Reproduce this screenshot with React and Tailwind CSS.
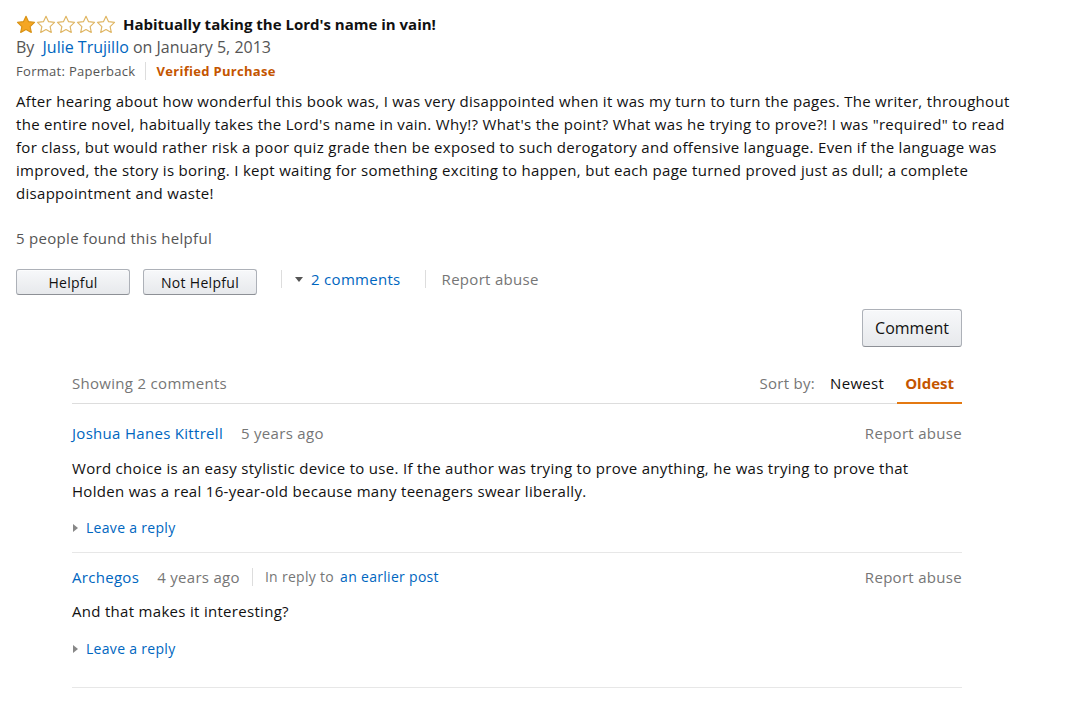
const FONT = { fontFamily: '"Open Sans", "Liberation Sans", sans-serif' };

function Star({ filled }) {
  return (
    <svg width="20" height="19" viewBox="0 0 24 23">
      <path
        d="M12 1.5l3.1 6.6 7.2.9-5.3 5 1.4 7.1L12 17.6l-6.4 3.5 1.4-7.1-5.3-5 7.2-.9z"
        fill={filled ? "#f5a623" : "#ffffff"}
        stroke={filled ? "#d99214" : "#dfb562"}
        strokeWidth="1.4"
        strokeLinejoin="round"
      />
    </svg>
  );
}

function Btn({ children, className = "" }) {
  return (
    <button
      className={
        "rounded-[3px] border border-[#adb1b8] border-b-[#8d9096] bg-gradient-to-b from-[#f7f8fa] to-[#e7e9ec] text-[#111] shadow-[0_1px_0_rgba(255,255,255,0.6)_inset] " +
        className
      }
    >
      {children}
    </button>
  );
}

function Caret({ dir }) {
  if (dir === "down")
    return (
      <svg width="8" height="5" viewBox="0 0 8 5">
        <path d="M0 0h8L4 5z" fill="#555" />
      </svg>
    );
  return (
    <svg width="5" height="8" viewBox="0 0 5 8">
      <path d="M0 0l5 4-5 4z" fill="#888" />
    </svg>
  );
}

const bodyLines = [
  "After hearing about how wonderful this book was, I was very disappointed when it was my turn to turn the pages. The writer, throughout",
  "the entire novel, habitually takes the Lord's name in vain. Why!? What's the point? What was he trying to prove?! I was \"required\" to read",
  "for class, but would rather risk a poor quiz grade then be exposed to such derogatory and offensive language. Even if the language was",
  "improved, the story is boring. I kept waiting for something exciting to happen, but each page turned proved just as dull; a complete",
  "disappointment and waste!",
];

export default function App() {
  return (
    <div className="min-h-screen bg-white px-4 tracking-[0.3px] text-[#111]" style={FONT}>
      {/* titulo */}
      <div className="mt-[14px] flex h-5 items-center">
        <div className="flex">
          <Star filled />
          <Star />
          <Star />
          <Star />
          <Star />
        </div>
        <span className="ml-[7px] text-[15px] font-bold leading-5 tracking-normal">
          Habitually taking the Lord's name in vain!
        </span>
      </div>

      <div className="mt-[2px] text-[16px] leading-[22px] tracking-normal text-[#555]">
        By <a className="ml-1 text-[#0066c0]">Julie Trujillo</a> on January 5, 2013
      </div>

      <div className="mt-[3px] flex items-center text-[13px] leading-5">
        <span className="text-[#555]">Format: Paperback</span>
        <span className="mx-[10px] h-[18px] w-px bg-[#ddd]"></span>
        <span className="font-bold text-[#c45500]">Verified Purchase</span>
      </div>

      {/* texto */}
      <div className="mt-[9px] text-[15px] leading-[23px]">
        {bodyLines.map((l, i) => (
          <div key={i} className="whitespace-nowrap">
            {l}
          </div>
        ))}
      </div>

      <div className="mt-[22px] text-[15px] leading-[23px] text-[#555]">
        5 people found this helpful
      </div>

      <div className="mt-[19px] flex h-[26px] items-center">
        <Btn className="h-[26px] w-[114px] text-[14px]">Helpful</Btn>
        <Btn className="ml-[13px] h-[26px] w-[114px] text-[14px]">Not Helpful</Btn>
        <span className="ml-[24px] -mt-[6px] h-[18px] w-px bg-[#ddd]"></span>
        <span className="ml-[13px] -mt-[6px]">
          <Caret dir="down" />
        </span>
        <a className="ml-[8px] -mt-[6px] text-[15px] text-[#0066c0]">2 comments</a>
        <span className="ml-[24px] -mt-[6px] h-[18px] w-px bg-[#ddd]"></span>
        <span className="ml-[16px] -mt-[6px] text-[15px] text-[#767676]">Report abuse</span>
      </div>

      {/* comentarios */}
      <div className="ml-[56px] w-[890px]">
        <div className="mt-[14px] flex justify-end">
          <Btn className="h-[38px] w-[100px] text-[16px] tracking-normal">Comment</Btn>
        </div>

        <div className="mt-[16px] flex items-stretch border-b border-[#ddd] text-[15px] leading-[22px]">
          <div className="flex-1 pt-[9px] pb-[9px] text-[#767676]">Showing 2 comments</div>
          <div className="pt-[9px] text-[#767676]">Sort by:</div>
          <div className="ml-[7px] px-2 pt-[9px]">Newest</div>
          <div className="-mb-px ml-[5px] border-b-2 border-[#e47911] px-2 pt-[9px] font-bold tracking-normal text-[#c45500]">
            Oldest
          </div>
        </div>

        <div className="mt-[18px] flex text-[15px] leading-[22px]">
          <a className="text-[#0066c0]">Joshua Hanes Kittrell</a>
          <span className="ml-[18px] text-[#767676]">5 years ago</span>
          <span className="ml-auto text-[#767676]">Report abuse</span>
        </div>
        <div className="mt-[13px] text-[15px] leading-[23px]">
          <div>Word choice is an easy stylistic device to use. If the author was trying to prove anything, he was trying to prove that</div>
          <div>Holden was a real 16-year-old because many teenagers swear liberally.</div>
        </div>
        <div className="mt-[15px] flex items-center text-[14px] leading-5">
          <span className="ml-[1px]"><Caret /></span>
          <a className="ml-[8px] text-[#0066c0]">Leave a reply</a>
        </div>
        <div className="mt-[14px] h-px bg-[#e7e7e7]"></div>

        <div className="mt-[13px] flex items-center text-[15px] leading-[22px]">
          <a className="text-[#0066c0]">Archegos</a>
          <span className="ml-[18px] text-[#767676]">4 years ago</span>
          <span className="mx-[12px] h-[18px] w-px bg-[#ddd]"></span>
          <span className="text-[14px] text-[#767676]">In reply to</span>
          <a className="ml-[6px] text-[14px] text-[#0066c0]">an earlier post</a>
          <span className="ml-auto text-[#767676]">Report abuse</span>
        </div>
        <div className="mt-[12px] text-[15px] leading-[23px]">And that makes it interesting?</div>
        <div className="mt-[16px] flex items-center text-[14px] leading-5">
          <span className="ml-[1px]"><Caret /></span>
          <a className="ml-[8px] text-[#0066c0]">Leave a reply</a>
        </div>
        <div className="mt-[28px] h-px bg-[#e7e7e7]"></div>
      </div>
    </div>
  );
}
